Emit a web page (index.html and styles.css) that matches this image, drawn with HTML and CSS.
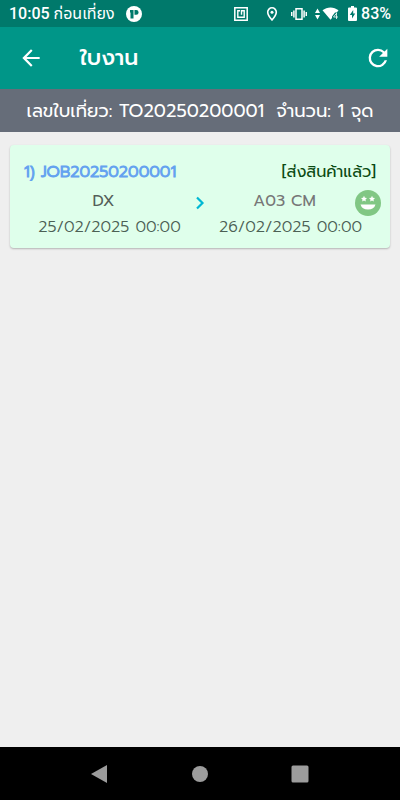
FILE: index.html
```html
<!DOCTYPE html>
<html lang="th">
<head>
<meta charset="utf-8">
<meta name="viewport" content="width=device-width, initial-scale=1">
<title>ใบงาน</title>
<link rel="stylesheet" href="styles.css">
</head>
<body>
<div class="status">
  <span class="clock"><b>10:05</b> ก่อนเที่ยง</span>
  <svg class="app-badge" width="16" height="16" viewBox="0 0 16 16"><circle cx="8" cy="8" r="8" fill="#fff"/><path d="M4 4h3.500v8.500H4.500V6.500H4zM8.500 4h1.700a2.400 2.400 0 0 1 0 4.800H8.500z" fill="#00796b"/></svg>
  <div class="indicators">
    <svg width="14" height="14" viewBox="0 0 14 14" fill="none" stroke="#fff"><path d="M.8.8h12.400v12.400H.8z" stroke-width="1.500"/><path d="M6 3.800H3.800v6.400h6.400V3.800H7.500v4" stroke-width="1.400"/></svg>
    <svg class="pin" width="12" height="14" viewBox="0 0 12 14"><path d="M6 .8a4.300 4.300 0 0 0-4.300 4.300C1.700 8.400 6 13 6 13s4.300-4.600 4.300-7.900A4.300 4.300 0 0 0 6 .8z" fill="none" stroke="#fff" stroke-width="1.600"/><circle cx="6" cy="5.200" r="1.500" fill="#fff"/></svg>
    <svg class="vibrate" width="16" height="14" viewBox="0 0 16 14" fill="none" stroke="#fff" stroke-width="1.500"><path d="M5 1.700h6v10.600H5zM2.900 3.500v7M13.100 3.500v7M.7 5v4M15.300 5v4"/></svg>
    <svg class="wifi" width="25" height="14" viewBox="0 0 25 14" fill="#fff"><path d="M0 6 2.500 1.500 5 6zM0 8h5L2.500 12.500z"/><path d="M7.500 3.300C12-.6 19-.6 23.500 3.300L21.800 5.500H20L17 9.500v1.500l-1.500 1.800z"/><path d="M21.500 6v6M21.500 6.300 18.500 10H23" fill="none" stroke="#fff" stroke-opacity=".8"/></svg>
    <svg class="battery" width="9" height="15" viewBox="0 0 9 15"><path d="M3 0h3v1.500h2q1 0 1 1V14q0 1-1 1H1q-1 0-1-1V2.500q0-1 1-1h2z" fill="#fff"/><path d="M5.200 4 1.800 9H4v3.500L7.200 7.500H5.200z" fill="#00796b"/></svg>
    <b>83%</b>
  </div>
</div>
<header class="appbar">
  <button class="icon-button" aria-label="ย้อนกลับ"><svg width="26" height="26" viewBox="0 0 24 24"><path d="M20 11H7.830l5.590-5.590L12 4l-8 8 8 8 1.410-1.410L7.830 13H20z" fill="#fff"/></svg></button>
  <h1>ใบงาน</h1>
  <button class="icon-button" aria-label="รีเฟรช"><svg width="28" height="28" viewBox="0 0 24 24"><path d="M17.650 6.350A7.960 7.960 0 0 0 12 4a8 8 0 1 0 7.730 10h-2.080A6 6 0 1 1 12 6c1.660 0 3.140.690 4.220 1.780L13 11h7V4z" fill="#fff"/></svg></button>
</header>
<div class="trip"><span>เลขใบเที่ยว: TO20250200001</span><span>จำนวน: 1 จุด</span></div>
<main>
  <article class="card">
    <div class="card-head"><h2>1) JOB20250200001</h2><span class="state">[ส่งสินค้าแล้ว]</span></div>
    <div class="route">
      <div class="stop"><span class="place">DX</span><time>25/02/2025 00:00</time></div>
      <svg class="chevron" width="10" height="14" viewBox="0 0 10 14"><path d="m2 1.500 5.500 5.500L2 12.500" fill="none" stroke="#00b8d4" stroke-width="2.200"/></svg>
      <div class="stop"><span class="place muted">A03 CM</span><time>26/02/2025 00:00</time></div>
      <svg class="face" width="26" height="26" viewBox="0 0 26 26"><circle cx="13" cy="13" r="13" fill="#81c784"/><path d="M5.500 14.500h15a7.700 6.500 0 0 1-15 0z" fill="#fff"/><path id="star" d="m9 5.800 .9 1.900 2.100.3-1.500 1.500.3 2.100L9 10.600l-1.800 1 .300-2.100L6 8l2.100-.3z" fill="#fff"/><use href="#star" x="8"/></svg>
    </div>
  </article>
</main>
<nav class="system-nav">
  <button aria-label="กลับ"><svg width="18" height="18" viewBox="0 0 18 18"><path d="M0 9 16 0v18z" fill="#9c9c9c"/></svg></button>
  <button aria-label="หน้าหลัก"><svg width="18" height="18" viewBox="0 0 18 18"><circle cx="9" cy="9" r="8" fill="#9c9c9c"/></svg></button>
  <button aria-label="ล่าสุด"><svg width="18" height="18" viewBox="0 0 18 18"><rect x=".5" y=".5" width="17" height="17" rx="1.500" fill="#9c9c9c"/></svg></button>
</nav>
</body>
</html>
```
FILE: styles.css
```css
* { box-sizing: border-box; }
body {
  margin: 0;
  min-height: 100vh;
  display: flex;
  flex-direction: column;
  background: #efefef;
  font-family: Prompt, Kanit, Inter, "Noto Sans Thai", "Noto Sans", sans-serif;
}
h1, h2 { margin: 0; }
svg { display: block; flex: none; }
button { border: 0; padding: 0; background: none; display: grid; place-items: center; }
.status {
  height: 27px;
  display: flex;
  align-items: center;
  padding: 0 9px;
  background: #00796b;
  color: #fff;
  font-family: Roboto, "Noto Sans Thai", sans-serif;
  font-size: 16px;
  white-space: nowrap;
}
.status b { font-weight: 500; }
.app-badge { margin-left: 11px; }
.indicators { margin-left: auto; display: flex; align-items: center; }
.pin { margin-left: 18px; }
.vibrate { margin-left: 13px; }
.wifi { margin-left: 8px; }
.battery { margin: 0 4px 0 8px; }
.appbar {
  height: 62px;
  display: flex;
  align-items: center;
  padding: 0 8px 0 18px;
  background: #009688;
  color: #fff;
}
.appbar h1 { flex: 1; margin-left: 36px; font-size: 22px; line-height: 32px; font-weight: 500; }
.trip {
  height: 43px;
  display: flex;
  align-items: center;
  justify-content: center;
  gap: 12px;
  background: #666d79;
  color: #fff;
  font-size: 18px;
  white-space: nowrap;
}
main { flex: 1; padding: 13px 10px; }
.card {
  padding: 14px 14px 8px;
  border-radius: 4px;
  background: #dfffeb;
  box-shadow: 0 1px 2px rgba(0, 0, 0, .25);
}
.card-head { display: flex; justify-content: space-between; align-items: center; line-height: 26px; white-space: nowrap; }
.card-head h2 { font-size: 16px; font-weight: 300; color: #64a2f0; -webkit-text-stroke: 1px #64a2f0; }
.state { font-size: 16px; font-weight: 400; color: #0b4a12; }
.route { position: relative; display: flex; margin-top: 3px; line-height: 26px; font-size: 16px; font-weight: 300; color: #4c6054; }
.stop { flex: 1; display: flex; flex-direction: column; align-items: center; white-space: nowrap; }
.place { padding-right: 12px; font-weight: 400; color: #555f59; }
.place.muted { color: #777; }
.chevron { margin-top: 8px; }
.face { position: absolute; right: -5px; top: 2px; }
.system-nav {
  height: 53px;
  display: flex;
  justify-content: space-between;
  align-items: center;
  padding: 0 91px;
  background: #000;
}
```
